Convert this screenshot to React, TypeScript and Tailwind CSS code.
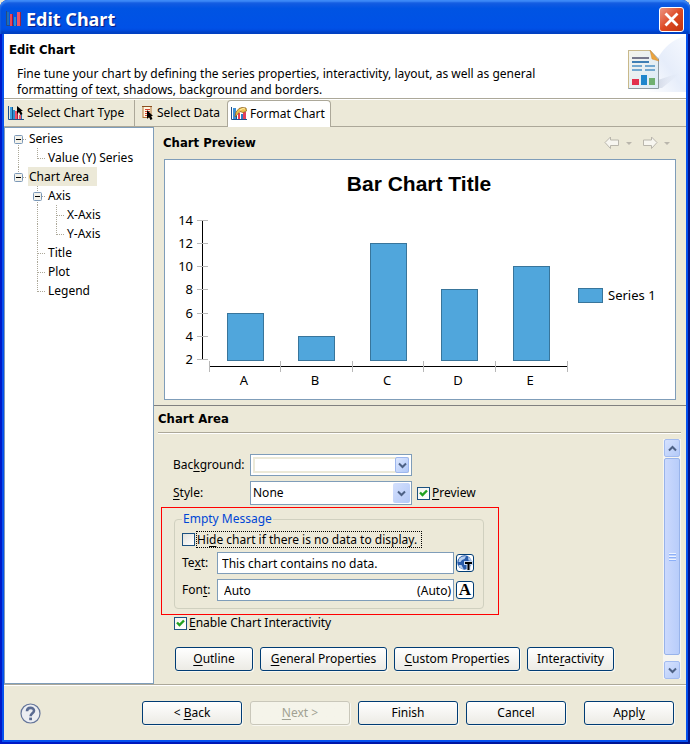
import { useState } from "react";
import type { ReactNode } from "react";

/* ---------- data ---------- */

const bars = [
  { label: "A", value: 6 },
  { label: "B", value: 4 },
  { label: "C", value: 12 },
  { label: "D", value: 8 },
  { label: "E", value: 10 },
];

type Guide = "gap" | "line" | "tee" | "elbow" | "boxFirst" | "boxLast" | "boxMid";

const treeRows: { label: string; guides: Guide[] }[] = [
  { label: "Series", guides: ["boxFirst"] },
  { label: "Value (Y) Series", guides: ["line", "elbow"] },
  { label: "Chart Area", guides: ["boxLast"] },
  { label: "Axis", guides: ["gap", "boxMid"] },
  { label: "X-Axis", guides: ["gap", "line", "tee"] },
  { label: "Y-Axis", guides: ["gap", "line", "elbow"] },
  { label: "Title", guides: ["gap", "tee"] },
  { label: "Plot", guides: ["gap", "tee"] },
  { label: "Legend", guides: ["gap", "elbow"] },
];

/* ---------- icons ---------- */

function AppIcon() {
  return (
    <svg width="16" height="16" viewBox="0 0 16 16" aria-hidden="true">
      <path d="M.5 0V14.5H15" fill="none" stroke="#2a4a80" />
      <rect x="1" y="1" width="2" height="13" fill="#1d6fb8" />
      <rect x="4" y="3" width="2" height="12" fill="#e8485c" />
      <rect x="6" y="3" width="1" height="12" fill="#a01c38" />
      <rect x="8" y="6" width="2" height="9" fill="#2b8fd0" />
      <rect x="11" y="1" width="3" height="14" fill="#ee5568" />
      <rect x="14" y="1" width="1" height="14" fill="#9c2440" />
    </svg>
  );
}

function ChartTypeIcon() {
  return (
    <svg width="16" height="16" viewBox="0 0 16 16" aria-hidden="true">
      <path d="M.5 1V14.5H16" fill="none" stroke="#1d4f8c" />
      <rect x="2" y="2" width="2" height="12" fill="#3fa2e0" />
      <rect x="4" y="2" width="1" height="12" fill="#12568c" />
      <rect x="5" y="5" width="2" height="9" fill="#2f8fd0" />
      <rect x="7" y="6" width="2" height="8" fill="#f0506a" />
      <rect x="9" y="8" width="1" height="6" fill="#a81f3c" />
      <rect x="11" y="10" width="2" height="4" fill="#ef5a70" />
      <rect x="13" y="9" width="1" height="5" fill="#2a6fae" />
      <path d="M9 1v8l2-2 1.500 3 2-1-1.500-3h2Z" fill="#000" />
    </svg>
  );
}

function DataIcon() {
  return (
    <svg width="12" height="16" viewBox="0 0 12 16" aria-hidden="true">
      <rect x="1" y="1.500" width="8" height="11" fill="#fff7e0" stroke="#b5763a" />
      <path d="M0 1.500H10" stroke="#8a4f20" />
      <path d="M3 4.500H8M3 6.500H8M3 8.500H8M3 10.500H5" stroke="#d8402c" />
      <path d="M5 5v9l2-2 1.500 3 2-1-1.500-3H11Z" fill="#000" />
    </svg>
  );
}

function FormatIcon() {
  return (
    <svg width="16" height="16" viewBox="0 0 16 16" aria-hidden="true">
      <path d="M.5 1V13.500H16" fill="none" stroke="#1d4f8c" />
      <rect x="2" y="2" width="3" height="11" fill="#3b8fd6" />
      <rect x="5" y="6" width="1" height="7" fill="#1b4f88" />
      <rect x="7" y="7" width="2" height="6" fill="#f03a50" />
      <rect x="10" y="8" width="2" height="5" fill="#2d7cc8" />
      <rect x="12" y="6" width="3" height="7" fill="#e2405a" />
      <path d="M5 6 8 2.500 11 1.500 15 2 15.500 5 12 6.500 9 5.500 4 11Z" fill="#efc04c" stroke="#8f6420" strokeWidth=".8" />
      <path d="m9 4 3-1.500 2 .5" fill="none" stroke="#fff0b0" />
    </svg>
  );
}

function BannerArt() {
  return (
    <svg className="block" width="64" height="58" viewBox="0 0 64 58" aria-hidden="true">
      <defs>
        <linearGradient id="swoosh" x1="0" y1="1" x2="1" y2="0">
          <stop offset="0" stopColor="#ffffff" />
          <stop offset=".5" stopColor="#e6edfa" />
          <stop offset="1" stopColor="#f6f9ff" />
        </linearGradient>
        <linearGradient id="shade" x1="0" y1="0" x2="1" y2="0">
          <stop offset=".5" stopColor="#b4bcd0" />
          <stop offset="1" stopColor="#e6edfa" stopOpacity="0" />
        </linearGradient>
        <linearGradient id="sheet" x1="0" y1="0" x2="1" y2="1">
          <stop offset="0" stopColor="#f4f4ec" />
          <stop offset="1" stopColor="#dcebf8" />
        </linearGradient>
      </defs>
      <path d="M24 58C30 26 44 6 64 2V58Z" fill="url(#swoosh)" />
      <path d="M6 55 40 54 60 38 36 46Z" fill="url(#shade)" opacity=".6" />
      <path d="M6.500 16.500H28L36.500 25V54.500H6.500Z" fill="url(#sheet)" stroke="#8d9aa0" />
      <path d="M6.500 54V16.500H28" fill="none" stroke="#c9b98a" />
      <path d="M28 16 37 27 30 25Z" fill="#eda43c" stroke="#d08a30" strokeWidth=".5" />
      <path d="M10 24H27" stroke="#77798c" strokeWidth="2" />
      <path d="M10 28H27" stroke="#3f7fb4" strokeWidth="2" />
      <path d="M10 32H20M23 32H33M10 36H20M23 36H33" stroke="#74a9d0" strokeWidth="2" />
      <rect x="10" y="45" width="7" height="6" fill="#e2304c" />
      <rect x="19" y="41" width="6" height="10" fill="#1f86cc" />
      <rect x="27" y="44" width="6" height="7" fill="#70b070" />
    </svg>
  );
}

function NavArrow({ flip = false }: { flip?: boolean }) {
  return (
    <svg className={flip ? "-scale-x-100" : ""} width="16" height="14" viewBox="0 0 16 14" aria-hidden="true">
      <path d="M1 6.500 6.500 1V4H14.500V9.500H6.500V12.500Z" fill="#f7f6f0" stroke="#b9b6ac" />
    </svg>
  );
}

function Chevron({ up = false }: { up?: boolean }) {
  return (
    <svg className={up ? "rotate-180" : ""} width="9" height="7" viewBox="0 0 9 7" aria-hidden="true">
      <path d="M1 1.500 4.500 5 8 1.500" fill="none" stroke="#4d6185" strokeWidth="2" />
    </svg>
  );
}

function GlobeTextIcon() {
  return (
    <svg width="16" height="16" viewBox="0 0 16 16" aria-hidden="true">
      <circle cx="7.500" cy="7.500" r="7.200" fill="#2a5dab" />
      <path d="M2 4C4 1.500 7 1 9 1.500L7.500 4 5 5 3.500 7 1.500 7ZM11 2c2 1 3 2 3.500 4l-3-.5ZM1.500 10l3 0 2 4C4 14 2 12 1.500 10Z" fill="#b9d0ee" />
      <path d="M7 6H16V10H13.500V15.500H9.500V10H7Z" fill="#c6d8f0" />
      <path d="M8 7H15V9H12.500V15H10.500V9H8Z" fill="#000" />
    </svg>
  );
}

function TreeGuide({ kind }: { kind: Guide }) {
  const box = kind === "boxFirst" || kind === "boxLast" || kind === "boxMid";
  const above = kind !== "gap" && kind !== "boxFirst";
  const below = kind === "line" || kind === "tee" || kind === "boxFirst" || kind === "boxMid";
  const across = kind !== "gap" && kind !== "line";
  return (
    <svg className="shrink-0" width="19" height="19" viewBox="0 0 19 19" aria-hidden="true">
      <g stroke="#aca899" strokeDasharray="1 1" fill="none">
        {above && <path d="M9.500 0V11" />}
        {below && <path d="M9.500 10V19" />}
        {across && <path d="M10 10.500H18" />}
      </g>
      {box && (
        <>
          <rect x="5.500" y="6.500" width="8" height="8" rx="1" fill="#f4f2ea" stroke="#7b98b8" />
          <path d="M7 10.500H12" stroke="#000" />
        </>
      )}
    </svg>
  );
}

/* ---------- small controls ---------- */

/** Label with its access key underlined. */
function Mnemonic({ text, at }: { text: string; at: number }) {
  return (
    <>
      {text.slice(0, at)}
      <span className="underline underline-offset-2">{text[at]}</span>
      {text.slice(at + 1)}
    </>
  );
}

function PushButton({ className, children, disabled }: { className: string; children: ReactNode; disabled?: boolean }) {
  return (
    <button
      type="button"
      disabled={disabled}
      className={`h-6 whitespace-nowrap rounded-[3px] border border-[#003c74] bg-linear-to-b from-white to-[#ecebe5] text-center leading-[22px] shadow-[1px_1px_0_#f8f7f0] disabled:border-[#c9c7ba] disabled:bg-[#f5f4ea] disabled:from-[#f5f4ea] disabled:to-[#f5f4ea] disabled:text-[#a1a192] ${className}`}
    >
      {children}
    </button>
  );
}

function CheckBox({ id, initial, className, children }: { id: string; initial: boolean; className?: string; children: ReactNode }) {
  const [on, setOn] = useState(initial);
  return (
    <div className="flex items-center gap-0.5">
      <span className="grid">
        <input
          id={id}
          type="checkbox"
          checked={on}
          onChange={(e) => setOn(e.target.checked)}
          className="col-start-1 row-start-1 size-[13px] appearance-none border border-[#1c5180] bg-linear-to-br from-[#e2e2dc] to-white checked:from-[#f4f4f0]"
        />
        {on && (
          <svg className="pointer-events-none col-start-1 row-start-1" width="13" height="13" viewBox="0 0 13 13" aria-hidden="true">
            <path d="M3 5.500 5.500 8 10 3.500" fill="none" stroke="#21a121" strokeWidth="2.400" />
          </svg>
        )}
      </span>
      <label htmlFor={id} className={className}>
        {children}
      </label>
    </div>
  );
}

function Drop({ inset }: { inset?: boolean }) {
  return (
    <span
      className={
        inset
          ? "pointer-events-none absolute top-[3px] right-[3px] bottom-[3px] flex w-3.5 items-center justify-center rounded-xs border border-[#9db7ee] bg-linear-to-br from-[#dde7fe] to-[#b0c8f8]"
          : "pointer-events-none absolute top-0.5 right-0.5 bottom-0.5 flex w-[17px] items-center justify-center rounded-xs bg-linear-to-br from-[#d4e0fd] to-[#b4c9f7]"
      }
    >
      <Chevron />
    </span>
  );
}

/* ---------- chart ---------- */

function BarChart() {
  const yOf = (v: number) => 200 - Math.round(((v - 2) * 139) / 12);
  return (
    <svg className="block w-full" viewBox="0 0 510 239" role="img" aria-label="Bar Chart Title">
      <text x="254" y="31" textAnchor="middle" className="fill-black font-['Liberation_Sans',sans-serif] text-[21px] font-bold">
        Bar Chart Title
      </text>
      <path d="M37.500 61V200M45 206.500H402" stroke="#000" />
      {[2, 4, 6, 8, 10, 12, 14].map((v) => (
        <g key={v}>
          <path d={`M32 ${yOf(v) - 0.5}H43`} stroke="#b8b8b8" />
          <text x="28" y={yOf(v) + 4} textAnchor="end" className="fill-black text-[13px]">
            {v}
          </text>
        </g>
      ))}
      {[0, 1, 2, 3, 4, 5].map((i) => (
        <path key={i} d={`M${44.5 + Math.floor(i * 71.6)} 201V212`} stroke="#b8b8b8" />
      ))}
      {bars.map((b, i) => (
        <g key={b.label}>
          <rect
            x={62.5 + Math.floor(i * 71.6)}
            y={yOf(b.value) - 0.5}
            width="36"
            height={201 - yOf(b.value)}
            fill="#50a6dc"
            stroke="#38759b"
          />
          <text x={79 + Math.floor(i * 71.6)} y="225" textAnchor="middle" className="fill-black text-[13px]">
            {b.label}
          </text>
        </g>
      ))}
      <rect x="413.500" y="128.500" width="24" height="14" fill="#50a6dc" stroke="#38759b" />
      <text x="443" y="140" className="fill-black text-[13px]">
        Series 1
      </text>
    </svg>
  );
}

/* ---------- window ---------- */

export default function App() {
  return (
    <div className="min-h-screen bg-[#ece9d8] font-['Noto_Sans','DejaVu_Sans',sans-serif] text-[12px] leading-4 text-black">
      <div className="flex min-h-screen flex-col rounded-t-lg bg-linear-to-r from-[#0019c8] to-[#00138c]">
        <header className="flex h-[34px] items-center rounded-t-lg bg-linear-to-b from-[#1a5fe0] via-[#0054e3] via-25% to-[#0050e8] pt-1 pr-1.5 pl-1.5 shadow-[inset_0_2px_2px_#3f8cf8,inset_0_-3px_3px_#003fc0]">
          <AppIcon />
          <h1 className="ml-1 flex-1 text-[18px] leading-6 font-bold text-white [text-shadow:1px_1px_1px_#0a1883]">Edit Chart</h1>
          <button type="button" aria-label="Close" className="flex size-[25px] items-center justify-center rounded-[3px] border border-white bg-linear-to-br from-[#ec9480] via-[#dd4a24] to-[#c2330c]">
            <svg width="15" height="15" viewBox="0 0 15 15" aria-hidden="true">
              <path d="M1.500 1.500 13.500 13.500M13.500 1.500 1.500 13.500" stroke="#fff" strokeWidth="2.800" />
            </svg>
          </button>
        </header>

        <div className="mx-0.5 mb-0.5 flex flex-1 flex-col border-x-2 border-b-2 border-[#0550ee] bg-[#ece9d8]">
          <section className="flex justify-between border-b border-[#aca899] bg-white pl-[5px]">
            <div className="pt-2">
              <h2 className="font-['DejaVu_Sans_Condensed',sans-serif] text-[13px] font-bold">Edit Chart</h2>
              <p className="mt-2 max-w-[570px] pl-2">
                Fine tune your chart by defining the series properties, interactivity, layout, as well as general
                formatting of text, shadows, background and borders.
              </p>
            </div>
            <div className="pb-1.5">
              <BannerArt />
            </div>
          </section>

          <nav className="flex h-7 border-b border-[#aca899] border-t border-t-white" role="tablist">
            <button type="button" role="tab" aria-selected="false" className="flex w-[131px] items-center gap-[3px] border-r border-[#aca899] pl-1">
              <ChartTypeIcon />
              Select Chart Type
            </button>
            <button type="button" role="tab" aria-selected="false" className="flex w-[92px] items-center gap-[3px] pl-[7px]">
              <DataIcon />
              Select Data
            </button>
            <button
              type="button"
              role="tab"
              aria-selected="true"
              className="-mb-px flex w-[104px] items-center gap-[3px] rounded-t border border-b-0 border-[#aca899] bg-white pl-[3px]"
            >
              <FormatIcon />
              Format Chart
            </button>
          </nav>

          <div className="flex flex-1">
            <aside className="w-[150px] shrink-0 border border-[#7f9db9] bg-white pt-px pl-1">
              <ul role="tree">
                {treeRows.map((row) => (
                  <li key={row.label} role="treeitem" className="flex h-[19px] items-center">
                    {row.guides.map((g, i) => (
                      <TreeGuide key={i} kind={g} />
                    ))}
                    <span
                      className={
                        row.label === "Chart Area"
                          ? "whitespace-nowrap bg-[#ece9d8] pr-2 pl-px leading-[19px]"
                          : "whitespace-nowrap pl-px leading-[19px]"
                      }
                    >
                      {row.label}
                    </span>
                  </li>
                ))}
              </ul>
            </aside>

            <main className="flex min-w-0 flex-1 flex-col">
              <div className="flex h-8 items-center justify-between pr-4 pl-[9px]">
                <h3 className="font-['DejaVu_Sans_Condensed',sans-serif] text-[13px] font-bold">Chart Preview</h3>
                <div className="flex items-center gap-1.5">
                  <button type="button" aria-label="Back in history">
                    <NavArrow />
                  </button>
                  <span className="mr-1 border-x-3 border-t-3 border-x-transparent border-t-[#b9b6ac]" />
                  <button type="button" aria-label="Forward in history">
                    <NavArrow flip />
                  </button>
                  <span className="border-x-3 border-t-3 border-x-transparent border-t-[#b9b6ac]" />
                </div>
              </div>
              <div className="mr-2.5 ml-2.5 border border-[#7f9db9] bg-white">
                <BarChart />
              </div>

              <section className="mt-[5px] flex flex-1 flex-col border-t border-[#808080] pr-[5px] pl-1">
                <h3 className="border-b border-[#aca899] pt-[5px] pb-[5px] font-['DejaVu_Sans_Condensed',sans-serif] text-[13px] font-bold shadow-[0_1px_0_#fff]">
                  Chart Area
                </h3>
                <div className="flex flex-1 pt-1.5 pb-[5px]">
                  <form className="flex-1 pt-[15px]">
                    <div className="flex items-center pl-[15px]">
                      <label htmlFor="background" className="w-[77px]">
                        <Mnemonic text="Background:" at={3} />
                      </label>
                      <div className="relative">
                        <select id="background" className="block h-[22px] w-[162px] appearance-none border border-[#7f9db9] bg-white pl-1 shadow-[inset_0_0_0_2px_#fff,inset_0_0_0_4px_#ece9d8]" />
                        <Drop inset />
                      </div>
                    </div>
                    <div className="mt-[5px] flex items-center pl-[15px]">
                      <label htmlFor="style" className="w-[77px]">
                        <Mnemonic text="Style:" at={0} />
                      </label>
                      <div className="relative mr-[5px]">
                        <select id="style" className="block h-6 w-[162px] appearance-none border border-[#7f9db9] bg-white pl-0.5">
                          <option>None</option>
                        </select>
                        <Drop />
                      </div>
                      <CheckBox id="preview" initial>
                        <Mnemonic text="Preview" at={0} />
                      </CheckBox>
                    </div>

                    <div className="mt-0.5 ml-[3px] w-[338px] border border-[#ff0000] px-3 pt-[3px] pb-[5px]">
                      <fieldset className="w-[310px] rounded border border-[#d0d0bf] pb-[7px] pl-[7px]">
                        <legend className="px-px leading-4 text-[#0046d5]">Empty Message</legend>
                        <div className="pt-[5px]">
                          <CheckBox id="hide" initial={false} className="pr-1 outline-1 outline-dotted outline-black leading-[15px]">
                            <Mnemonic text="Hide chart if there is no data to display." at={2} />
                          </CheckBox>
                        </div>
                        <div className="mt-[5px] flex items-center">
                          <label htmlFor="text" className="w-[35px]">
                            <Mnemonic text="Text:" at={2} />
                          </label>
                          <input id="text" defaultValue="This chart contains no data." className="h-[22px] w-[237px] border border-[#7f9db9] bg-white px-1" />
                          <button type="button" aria-label="Externalize text" className="ml-0.5 flex size-[18px] items-center justify-center rounded-[3px] border border-[#003c74] bg-white">
                            <GlobeTextIcon />
                          </button>
                        </div>
                        <div className="mt-[5px] flex items-center">
                          <label htmlFor="font" className="w-[35px]">
                            <Mnemonic text="Font:" at={3} />
                          </label>
                          <span className="flex h-[22px] w-[237px] items-center border border-[#7f9db9] bg-white pt-0.5">
                            <input id="font" readOnly defaultValue="Auto" className="w-0 min-w-0 flex-1 pl-1.5" />
                            <span className="pr-0.5">(Auto)</span>
                          </span>
                          <button
                            type="button"
                            aria-label="Edit font"
                            className="ml-0.5 size-[18px] rounded-[3px] border border-[#003c74] bg-white font-['Liberation_Serif',serif] text-[17px] leading-4 font-bold"
                          >
                            A
                          </button>
                        </div>
                      </fieldset>
                    </div>

                    <div className="mt-px ml-4 leading-[14px]">
                      <CheckBox id="interactive" initial>
                        <Mnemonic text="Enable Chart Interactivity" at={0} />
                      </CheckBox>
                    </div>

                    <div className="mt-[17px] ml-[17px] flex gap-[7px]">
                      <PushButton className="w-[78px]">
                        <Mnemonic text="Outline" at={0} />
                      </PushButton>
                      <PushButton className="w-[127px]">
                        <Mnemonic text="General Properties" at={0} />
                      </PushButton>
                      <PushButton className="w-[126px]">
                        <Mnemonic text="Custom Properties" at={0} />
                      </PushButton>
                      <PushButton className="w-[87px]">
                        <Mnemonic text="Interactivity" at={4} />
                      </PushButton>
                    </div>
                  </form>

                  <div className="flex w-[18px] flex-col bg-[#f6f5f0] px-px" role="scrollbar" aria-controls="background" aria-valuenow={0}>
                    <button type="button" aria-label="Scroll up" className="flex h-[18px] items-center justify-center rounded-xs border border-[#a3bcf0] bg-linear-to-br from-[#d6e2fe] to-[#b4caf8]">
                      <Chevron up />
                    </button>
                    <div className="mt-px mb-1.5 flex flex-1 flex-col items-center justify-center gap-px rounded-xs border border-[#98b3ea] bg-linear-to-r from-[#cbd9fd] to-[#b8cdfa]">
                      <span className="h-px w-[7px] bg-[#eef4fe] shadow-[0_1px_0_#8cb0f8]" />
                      <span className="mt-px h-px w-[7px] bg-[#eef4fe] shadow-[0_1px_0_#8cb0f8]" />
                      <span className="mt-px h-px w-[7px] bg-[#eef4fe] shadow-[0_1px_0_#8cb0f8]" />
                    </div>
                    <button type="button" aria-label="Scroll down" className="flex h-[18px] items-center justify-center rounded-xs border border-[#a3bcf0] bg-linear-to-br from-[#d6e2fe] to-[#b4caf8]">
                      <Chevron />
                    </button>
                  </div>
                </div>
              </section>
            </main>
          </div>

          <footer className="flex items-center justify-end gap-2 border-t border-[#aca899] pt-4 pr-3 pb-[15px] pl-4 shadow-[inset_0_1px_0_#fff]">
            <button type="button" aria-label="Help" className="mr-auto">
              <svg className="block" width="21" height="21" viewBox="0 0 21 21" aria-hidden="true">
                <circle cx="10.500" cy="10.500" r="9.500" fill="#eceef2" stroke="#64759a" strokeWidth="1.200" />
                <path d="M7 8.200C7 3.800 14 3.800 14 7.800 14 10.300 10.600 10.300 10.600 13.200" fill="none" stroke="#5a6b92" strokeWidth="2.600" />
                <rect x="9.200" y="14.600" width="2.800" height="2.600" fill="#5a6b92" />
              </svg>
            </button>
            <PushButton className="w-[100px]">
              &lt; <Mnemonic text="Back" at={0} />
            </PushButton>
            <PushButton className="w-[100px]" disabled>
              <Mnemonic text="Next >" at={0} />
            </PushButton>
            <PushButton className="w-[100px]">Finish</PushButton>
            <PushButton className="mr-2.5 w-[100px]">Cancel</PushButton>
            <PushButton className="w-[90px]">
              <Mnemonic text="Apply" at={4} />
            </PushButton>
          </footer>
        </div>
      </div>
    </div>
  );
}
